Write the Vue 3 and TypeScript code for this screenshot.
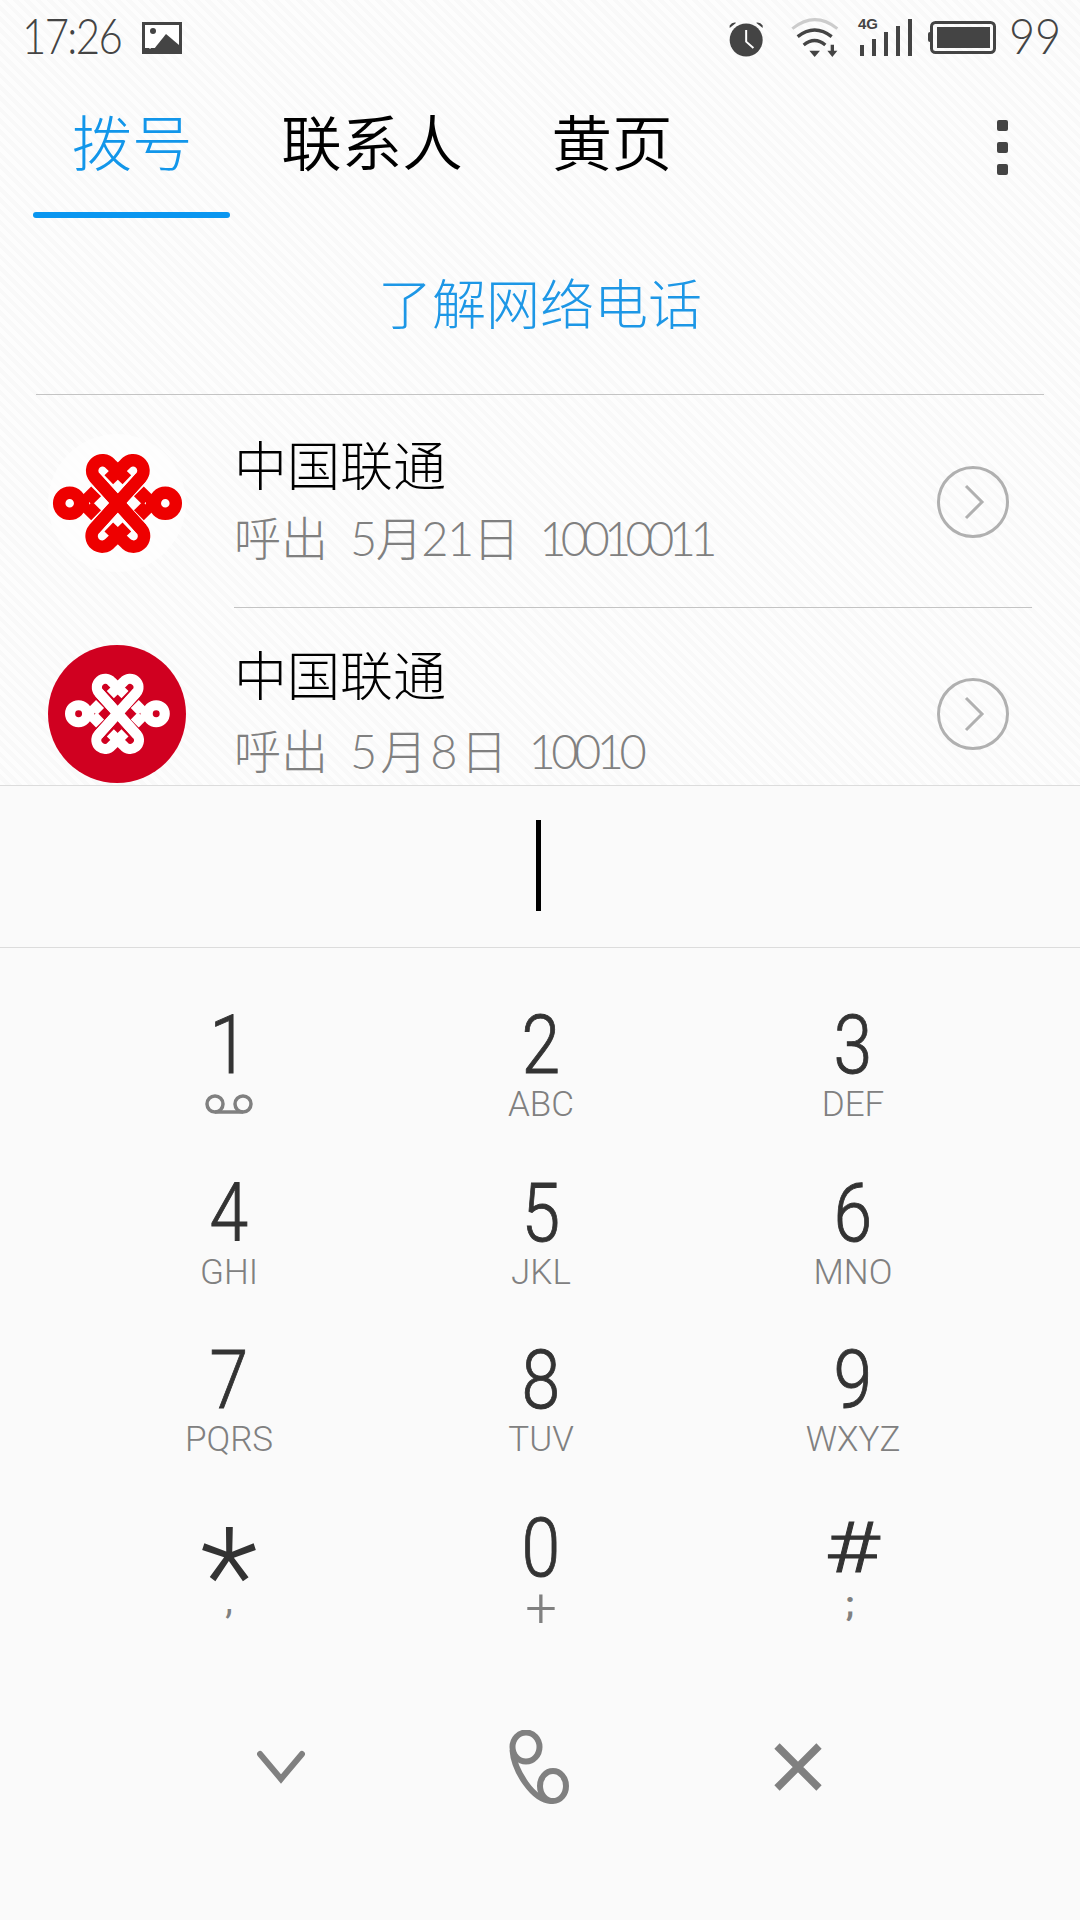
<script setup lang="ts">
interface Key { digit: string; sub: string; kind?: string; big?: string }
const keys: Key[] = [
  { digit: '1', sub: '', kind: 'vm' },
  { digit: '2', sub: 'ABC' },
  { digit: '3', sub: 'DEF' },
  { digit: '4', sub: 'GHI' },
  { digit: '5', sub: 'JKL' },
  { digit: '6', sub: 'MNO' },
  { digit: '7', sub: 'PQRS' },
  { digit: '8', sub: 'TUV' },
  { digit: '9', sub: 'WXYZ' },
  { digit: '*', sub: ',', kind: 'comma', big: 'star' },
  { digit: '0', sub: '+', kind: 'plus' },
  { digit: '#', sub: ';', kind: 'semi', big: 'hash' }
]
const calls = [
  { name: '中国联通', date: '5月21日', num: '10010011', logo: 'plain' },
  { name: '中国联通', date: '5月8日', num: '10010', logo: 'round' }
]
</script>

<template>
  <div class="screen">
    <svg class="defs" width="0" height="0">
      <defs>
        <g id="knot" fill="none" stroke-linejoin="miter">
          <path d="M285 243 L142 85 A31 31 0 0 1 190 44 L240 92" />
          <path d="M140 243 L283 85 A31 31 0 0 0 235 44 L185 92" />
          <path d="M142 85 L285 243 A31 31 0 0 1 235 284 L185 236" />
          <path d="M283 85 L140 243 A31 31 0 0 0 190 284 L240 236" />
          <circle cx="66" cy="164" r="32" />
          <circle cx="357" cy="164" r="32" />
          <path d="M95 164 L125 164 M118 126 L148 156 M118 202 L148 172" />
          <path d="M328 164 L298 164 M305 126 L275 156 M305 202 L275 172" />
        </g>
      </defs>
    </svg>

    <section class="top">
      <header class="status">
        <span class="clock">17:26</span>
        <svg class="pic" viewBox="0 0 40 32" width="40" height="32">
          <rect width="40" height="32" fill="#444" />
          <rect x="3" y="3" width="34" height="23" fill="#fff" />
          <circle cx="11" cy="9" r="3" fill="#444" />
          <path d="M8 32 L24 12 L37 23 V32 Z" fill="#444" />
          <path d="M7 26 L20 14" stroke="#fff" stroke-width="3" />
        </svg>
        <div class="status-right">
          <svg class="alarm" viewBox="20 25 115 120" width="38" height="40">
            <path d="M28 52 L28 44 Q36 33 48 36 Z M128 52 L128 44 Q120 33 108 36 Z" fill="#444" />
            <circle cx="78" cy="88" r="50" fill="#444" />
            <path d="M78 58 V93 L100 112" fill="none" stroke="#fff" stroke-width="6" />
          </svg>
          <svg class="wifi" viewBox="210 20 150 120" width="50" height="40">
            <path d="M217 52 Q285 -2 352 52" fill="none" stroke="#ccc" stroke-width="9" />
            <path d="M233 76 Q284 36 335 76" fill="none" stroke="#444" stroke-width="10" />
            <path d="M251 101 Q284 74 316 101" fill="none" stroke="#444" stroke-width="10" />
            <path d="M268 118 H300 L284 137 Z M332 100 H342 V118 H352 L337 137 L322 118 H332 Z" fill="#444" />
          </svg>
          <div class="signal">
            <span class="net">4G</span>
            <i class="bar b1"></i><i class="bar b2"></i><i class="bar b3"></i><i class="bar b4"></i><i class="bar b5"></i>
          </div>
          <svg class="battery" viewBox="0 0 68 33" width="68" height="33">
            <rect x="0" y="11" width="4" height="10" rx="2" fill="#444" />
            <rect x="3.5" y="1.5" width="63" height="30" rx="4" fill="none" stroke="#444" stroke-width="3" />
            <rect x="9" y="6" width="53" height="21" fill="#444" />
          </svg>
          <span class="level">99</span>
        </div>
      </header>

      <nav class="tabs">
        <div class="tab active">拨号</div>
        <div class="tab">联系人</div>
        <div class="tab">黄页</div>
        <div class="more"><i></i><i></i><i></i></div>
      </nav>

      <div class="learn">了解网络电话</div>

      <div class="list">
        <div v-for="(c, i) in calls" :key="i" class="row">
          <div class="logo" :class="c.logo">
            <svg v-if="c.logo === 'plain'" viewBox="0 -2 420 330" width="140" height="110">
              <use href="#knot" stroke="#ee0000" stroke-width="38" />
            </svg>
            <svg v-else viewBox="0 0 420 330" width="112" height="88">
              <use href="#knot" stroke="#ffffff" stroke-width="38" />
            </svg>
          </div>
          <div class="info">
            <div class="name">{{ c.name }}</div>
            <div class="sub"><span>呼出</span><span class="date">{{ c.date }}</span><span class="num">{{ c.num }}</span></div>
          </div>
          <svg class="go" viewBox="0 0 72 72" width="72" height="72">
            <circle cx="36" cy="36" r="34.5" fill="none" stroke="#b0b0b0" stroke-width="3" />
            <path d="M29 20 L45 36 L29 52" fill="none" stroke="#b0b0b0" stroke-width="3" />
          </svg>
        </div>
      </div>
    </section>

    <section class="panel">
      <div class="input"><i class="caret"></i></div>
      <div class="pad">
        <div v-for="k in keys" :key="k.digit" class="key">
          <span class="digit" :class="k.big">{{ k.digit }}</span>
          <svg v-if="k.kind === 'vm'" class="vm" viewBox="0 0 48 20" width="48" height="20">
            <circle cx="10" cy="10" r="8" fill="none" stroke="#808080" stroke-width="3.5" />
            <circle cx="38" cy="10" r="8" fill="none" stroke="#808080" stroke-width="3.5" />
            <path d="M10 18 H38" stroke="#808080" stroke-width="3.5" />
          </svg>
          <span v-else class="letters" :class="k.kind">{{ k.sub }}</span>
        </div>
      </div>
      <div class="actions">
        <svg viewBox="0 0 48 34" width="48" height="34">
          <path d="M3 4 L24 29 L45 4" fill="none" stroke="#808080" stroke-width="6" stroke-linecap="round" />
        </svg>
        <svg viewBox="0 0 60 74" width="60" height="74">
          <ellipse cx="17" cy="17" rx="13.5" ry="14.5" fill="none" stroke="#808080" stroke-width="6" />
          <ellipse cx="44" cy="56" rx="13" ry="15" fill="none" stroke="#808080" stroke-width="6" />
          <path d="M3.5 20 C5 40 24 72 44 71" fill="none" stroke="#808080" stroke-width="6" />
        </svg>
        <svg viewBox="0 0 48 48" width="48" height="48">
          <path d="M3 3 L45 45 M45 3 L3 45" fill="none" stroke="#808080" stroke-width="7.5" />
        </svg>
      </div>
    </section>
  </div>
</template>

<style scoped>
.screen {
  width: 1080px;
  height: 1920px;
  display: flex;
  flex-direction: column;
  overflow: hidden;
  font-family: "Noto Sans CJK SC", "Noto Sans", sans-serif;
  background: #fafafa;
}
.defs { position: absolute; }
.top {
  height: 785px;
  flex: none;
  overflow: hidden;
  background: repeating-linear-gradient(45deg, #fdfdfd 0 4px, #f9f9f9 4px 8px);
}
.status {
  height: 70px;
  display: flex;
  align-items: center;
  padding-left: 22px;
  color: #444;
}
.clock, .level {
  font-family: Lato, sans-serif;
  font-weight: 300;
  font-size: 50px;
  line-height: 70px;
  transform-origin: left center;
}
.clock { width: 97px; white-space: nowrap; letter-spacing: -2px; transform: scaleX(0.84); }
.level { width: 51px; transform: scaleX(0.9); }
.pic { margin-left: 23px; margin-top: 6px; }
.status-right {
  margin-left: auto;
  display: flex;
  align-items: center;
  padding-right: 20px;
}
.alarm { margin-right: 25px; margin-top: 7px; }
.wifi { margin-right: 20px; margin-top: 6px; }
.signal {
  width: 52px;
  height: 38px;
  display: flex;
  align-items: flex-end;
  justify-content: space-between;
  position: relative;
  margin-right: 16px;
  margin-top: 4px;
}
.net {
  position: absolute;
  left: -2px;
  top: -2px;
  font: 700 15px/16px "Liberation Sans", sans-serif;
  color: #444;
}
.bar { display: block; width: 4px; background: #444; }
.b1 { height: 11px; }
.b2 { height: 17px; }
.b3 { height: 24px; }
.b4 { height: 30px; }
.b5 { height: 37px; }
.battery { margin-right: 13px; margin-top: 4px; }
.tabs {
  height: 148px;
  display: flex;
  padding-left: 12px;
  position: relative;
}
.tab {
  width: 240px;
  height: 148px;
  box-sizing: border-box;
  text-align: center;
  font-size: 60.5px;
  font-weight: 350;
  line-height: 100px;
  color: #000;
  padding-top: 20px;
  position: relative;
}
.tab.active { color: #1296ea; font-weight: 300; }
.tab.active::after {
  content: "";
  position: absolute;
  left: 21px;
  width: 197px;
  bottom: 0;
  height: 6px;
  border-radius: 3px;
  background: #0a96f0;
}
.more {
  position: absolute;
  left: 997px;
  top: 50px;
  display: flex;
  flex-direction: column;
  gap: 11px;
}
.more i {
  display: block;
  width: 11px;
  height: 11px;
  border-radius: 2px;
  background: #444;
}
.learn {
  height: 177px;
  box-sizing: border-box;
  margin: 0 36px 0;
  border-bottom: 1px solid #c4c4c4;
  text-align: center;
  color: #1d97e6;
  font-size: 54px;
  font-weight: 300;
  line-height: 168px;
}
.row {
  height: 213px;
  display: flex;
  align-items: flex-start;
  position: relative;
}
.row + .row { height: 177px; }
.logo {
  position: absolute;
  left: 48px;
  top: 39px;
  width: 138px;
  height: 138px;
  border-radius: 50%;
  display: flex;
  align-items: center;
  justify-content: center;
  background: rgba(255, 255, 255, 0.6);
}
.logo.round { background: #d00020; top: 37px; }
.info {
  margin-left: 234px;
  width: 798px;
  height: 100%;
  box-sizing: border-box;
  padding-top: 33px;
}
.row:first-child .info { border-bottom: 1px solid #c4c4c4; padding-top: 36px; }
.name {
  font-size: 53px;
  font-weight: 300;
  line-height: 64px;
  color: #000;
}
.sub {
  display: flex;
  gap: 22px;
  font-family: Lato, "Noto Sans CJK SC", sans-serif;
  font-weight: 300;
  font-size: 47px;
  line-height: 60px;
  margin-top: 13px;
  color: #808080;
}
.row + .row .sub { margin-top: 16px; }
.date { letter-spacing: -1.5px; }
.row + .row .date { letter-spacing: 3px; }
.num { letter-spacing: -5.7px; margin-left: -1px; }
.row + .row .num { letter-spacing: -4.5px; margin-left: -4px; }
.go {
  position: absolute;
  left: 937px;
  top: 71px;
}
.row + .row .go { top: 70px; }
.panel {
  flex: 1;
  background: #fafafa;
  border-top: 1px solid #dcdcdc;
}
.input {
  height: 161px;
  border-bottom: 1px solid #dcdcdc;
  display: flex;
  justify-content: center;
  align-items: center;
}
.caret {
  display: block;
  width: 5px;
  height: 91px;
  margin-left: -3px;
  margin-top: -3px;
  background: #000;
}
.pad {
  display: grid;
  grid-template-columns: repeat(3, 312px);
  grid-auto-rows: 167.5px;
  padding: 62px 0 0 73px;
}
.key {
  display: flex;
  flex-direction: column;
  align-items: center;
}
.digit {
  font-family: Roboto, sans-serif;
  font-weight: 300;
  -webkit-text-stroke: 0.9px #333;
  font-size: 82px;
  line-height: 70px;
  color: #333;
  transform: scaleX(0.85);
}
.digit.star {
  font-size: 135px;
  -webkit-text-stroke: 0;
  transform: translateY(30px);
}
.digit.hash {
  font-size: 70px;
  -webkit-text-stroke: 0.8px #333;
  transform: scaleX(1.35) translateX(-1px);
}
.letters {
  font-family: Roboto, sans-serif;
  font-weight: 300;
  font-size: 35px;
  line-height: 48px;
  margin-top: 1px;
  color: #808080;
}
.vm { margin-top: 14px; }
.letters.plus { font-size: 56px; }
.letters.comma { font-weight: 400; font-size: 38px; transform: translateY(-8px); }
.letters.semi { font-weight: 700; font-size: 34px; transform: translate(-3px, -5px); }
.actions {
  display: flex;
  padding: 50px 0 0 257px;
  gap: 204px;
  align-items: center;
}
.actions svg:last-child { margin-left: 1px; }
</style>

<style>
html, body { margin: 0; background: #fafafa; }
</style>
